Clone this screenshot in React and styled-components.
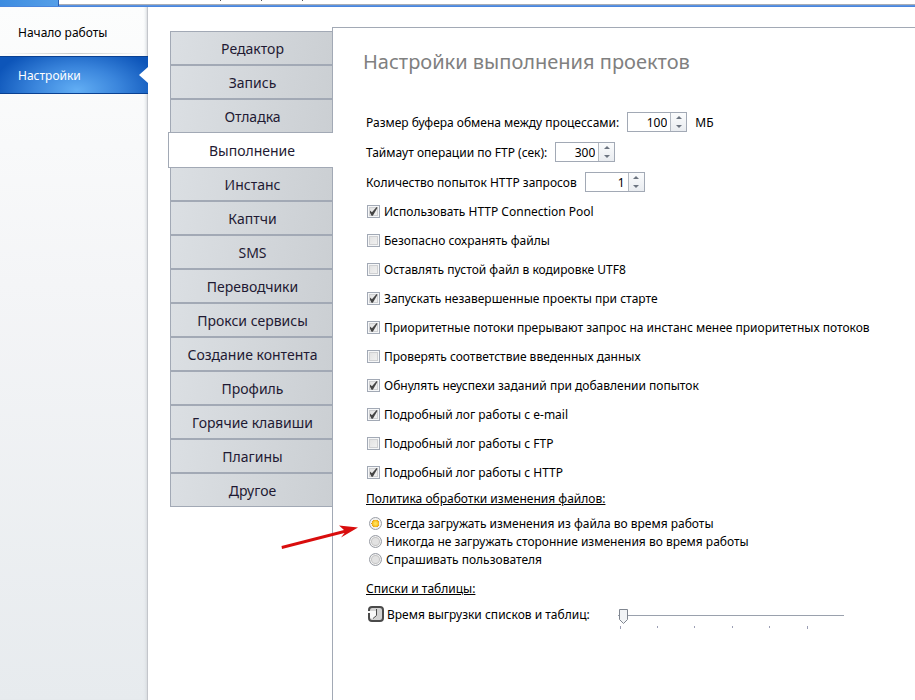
import React from 'react';
import styled, { createGlobalStyle } from 'styled-components';

const tabs = [
    'Редактор',
    'Запись',
    'Отладка',
    'Выполнение',
    'Инстанс',
    'Каптчи',
    'SMS',
    'Переводчики',
    'Прокси сервисы',
    'Создание контента',
    'Профиль',
    'Горячие клавиши',
    'Плагины',
    'Другое',
];

const numbers = [
    { id: 'buffer', label: 'Размер буфера обмена между процессами:', value: 100, unit: 'МБ' },
    { id: 'ftp', label: 'Таймаут операции по FTP (сек):', value: 300 },
    { id: 'tries', label: 'Количество попыток HTTP запросов', value: 1 },
];

const checks = [
    { label: 'Использовать HTTP Connection Pool', on: true },
    { label: 'Безопасно сохранять файлы', on: false },
    { label: 'Оставлять пустой файл в кодировке UTF8', on: false },
    { label: 'Запускать незавершенные проекты при старте', on: true },
    { label: 'Приоритетные потоки прерывают запрос на инстанс менее приоритетных потоков', on: true },
    { label: 'Проверять соответствие введенных данных', on: false },
    { label: 'Обнулять неуспехи заданий при добавлении попыток', on: true },
    { label: 'Подробный лог работы с e-mail', on: true },
    { label: 'Подробный лог работы с FTP', on: false },
    { label: 'Подробный лог работы с HTTP', on: true },
];

const policies = [
    'Всегда загружать изменения из файла во время работы',
    'Никогда не загружать сторонние изменения во время работы',
    'Спрашивать пользователя',
];

function NumberField({ id, label, value, unit }){
    return(
        <FieldRow>
            <label htmlFor={id}>{label}</label>
            <Spin>
                <input id={id} type="number" defaultValue={value} />
                <SpinButtons>
                    <SpinButton type="button" aria-label="Больше" $up />
                    <SpinButton type="button" aria-label="Меньше" />
                </SpinButtons>
            </Spin>
            {unit && <span>{unit}</span>}
        </FieldRow>
    );
}

function ClockIcon(){
    return(
        <svg width="16" height="16" viewBox="0 0 16 16" aria-hidden="true">
            <rect x="1" y="1" width="14" height="14" rx="3" fill="#d2d2d2" />
            <path d="M0 5h8.500v4.500L6 12.500H2.500z" fill="#f8f8f8" />
            <path d="M1 5V4a3 3 0 0 1 3-3h8a3 3 0 0 1 3 3v8a3 3 0 0 1-3 3H4a3 3 0 0 1-3-3V7" fill="none" stroke="#4a4a4a" strokeWidth="2" />
            <path d="M8.500 3v6.500L5 12.500" fill="none" stroke="#4a4a4a" strokeWidth="1" />
        </svg>
    );
}

function App(){
    return(
        <>
            <GlobalStyle />
            <Window>
                <TopBar>
                    <FileTab />
                    <Ribbon>
                        <i /><i /><i />
                    </Ribbon>
                </TopBar>

                <Body>
                    <Sidebar>
                        <SideLink href="#start">Начало работы</SideLink>
                        <SideLink href="#settings" $active>Настройки</SideLink>
                    </Sidebar>

                    <Main>
                        <Tabs>
                            {tabs.map((name) => (
                                <Tab key={name} type="button" $active={name === 'Выполнение'}>{name}</Tab>
                            ))}
                        </Tabs>

                        <Panel>
                            <h1>Настройки выполнения проектов</h1>
                            <Form>
                                {numbers.map((n) => <NumberField key={n.id} {...n} />)}

                                {checks.map((c) => (
                                    <CheckRow key={c.label}>
                                        <Check type="checkbox" defaultChecked={c.on} />
                                        {c.label}
                                    </CheckRow>
                                ))}

                                <SubTitle>Политика обработки изменения файлов:</SubTitle>
                                <RadioList>
                                    {policies.map((p, i) => (
                                        <RadioRow key={p}>
                                            <Radio type="radio" name="policy" defaultChecked={i === 0} />
                                            {p}
                                        </RadioRow>
                                    ))}
                                    <Arrow width="78" height="30" viewBox="0 0 78 30" aria-hidden="true">
                                        <path d="M0.500 24 1 27 63.500 11 60 15.500 77 5.500 58 3.500 63 8z" fill="#d90d0d" />
                                    </Arrow>
                                </RadioList>

                                <SubTitle $spaced>Списки и таблицы:</SubTitle>
                                <SliderRow>
                                    <SliderLabel htmlFor="unload">
                                        <ClockIcon />
                                        Время выгрузки списков и таблиц:
                                    </SliderLabel>
                                    <Slider>
                                        <input id="unload" type="range" min="0" max="60" defaultValue="0" />
                                        <Ticks>
                                            <i /><i /><i /><i /><i /><i />
                                        </Ticks>
                                    </Slider>
                                </SliderRow>
                            </Form>
                        </Panel>
                    </Main>
                </Body>
            </Window>
        </>
    );
}

export default App;

const GlobalStyle = createGlobalStyle`
* {
    box-sizing: border-box;
}

body {
    margin: 0;
    background: #fff;
    color: #000;
    font-family: "Noto Sans", "Open Sans", sans-serif;
    font-size: 12px;
}

button, input {
    margin: 0;
    font: inherit;
    color: inherit;
}
`;

const Window = styled.div`
display: flex;
flex-direction: column;
min-height: 100vh;
`;

const TopBar = styled.header`
display: flex;
height: 7px;
border-bottom: 1px solid #4a85dc;
`;

const FileTab = styled.div`
width: 59px;
background: linear-gradient(90deg, #3d8ce0, #559fe8);
border-right: 1px solid #2a5fb4;
`;

const Ribbon = styled.div`
flex: 1;
display: flex;
gap: 40px;
padding-left: 161px;
background: linear-gradient(#fff 4px, #a9adb5 4px, #a9adb5 5px, #5b93e0 5px);

i {
    width: 1px;
    height: 1px;
    background: #555;
}
`;

const Body = styled.div`
flex: 1;
display: flex;
`;

const Sidebar = styled.nav`
width: 148px;
flex-shrink: 0;
padding-top: 4px;
background: linear-gradient(#fcfdfd, #f4f5f7 40%, #e7ebee);
border-right: 1px solid #c3c6cb;
box-shadow: inset -3px 0 3px -2px #d5d9dd;
`;

const SideLink = styled.a`
position: relative;
display: flex;
align-items: center;
height: ${(p) => (p.$active ? '38px' : '43px')};
margin-right: ${(p) => (p.$active ? '-1px' : '0')};
margin-top: ${(p) => (p.$active ? '2px' : '0')};
padding-left: 18px;
color: ${(p) => (p.$active ? '#fff' : '#000')};
text-decoration: none;
border: solid #0a4192;
border-width: ${(p) => (p.$active ? '1px 0' : '0')};
background: ${(p) => (p.$active
    ? 'radial-gradient(ellipse 85px 46px at 52% 92%, #62aef4, #3a85dc 50%, #0d55b9)'
    : 'linear-gradient(90deg, transparent, #c9cccb 50%, transparent) bottom / 100% 1px no-repeat')};

&::after {
    content: "";
    display: ${(p) => (p.$active ? 'block' : 'none')};
    position: absolute;
    right: 0;
    top: 10px;
    border: solid transparent;
    border-width: 8px 9px 8px 0;
    border-right-color: #fff;
}
`;

const Main = styled.main`
flex: 1;
display: flex;
align-items: stretch;
padding: 20px 0 0 22px;
`;

const Tabs = styled.div`
width: 162px;
flex-shrink: 0;
display: flex;
flex-direction: column;
padding-top: 4px;
`;

const Tab = styled.button`
height: ${(p) => (p.$active ? '36px' : '34px')};
margin: ${(p) => (p.$active ? '-1px -1px -1px -2px' : '0')};
padding: 0 0 0 2px;
position: relative;
z-index: ${(p) => (p.$active ? 1 : 0)};
font-size: 14px;
color: #1f1a33;
border: 1px solid #a2a9b5;
border-right: 0;
background: ${(p) => (p.$active ? '#fff' : 'linear-gradient(100deg, #dbdfe3, #cbcfd3)')};
`;

const Panel = styled.section`
flex: 1;
min-width: 0;
padding: 19px 20px 20px 30px;
border: solid #a2a9b5;
border-width: 1px 0 0 1px;

h1 {
    margin: 0 0 30px;
    font-size: 20px;
    line-height: 30px;
    font-weight: 400;
    color: #808080;
}
`;

const Form = styled.form`
padding-left: 3px;
`;

const FieldRow = styled.div`
display: flex;
align-items: center;
gap: 8px;
height: 30px;
`;

const Spin = styled.div`
display: flex;
width: 60px;
height: 20px;
border: 1px solid #a2a9b5;

input {
    flex: 1;
    min-width: 0;
    padding: 0 3px 0 0;
    border: 0;
    outline: 0;
    background: #fff;
    text-align: right;
    appearance: textfield;
}

input::-webkit-inner-spin-button {
    appearance: none;
    margin: 0;
}
`;

const SpinButtons = styled.div`
display: flex;
flex-direction: column;
width: 16px;
border-left: 1px solid #b4bac3;
background: linear-gradient(#fbfcfd, #e9ecf0);
`;

const SpinButton = styled.button`
flex: 1;
display: flex;
align-items: center;
justify-content: center;
padding: 0;
border: 0;
background: none;

&::before {
    content: "";
    border: solid transparent;
    border-width: ${(p) => (p.$up ? '0 3px 3px' : '3px 3px 0')};
    border-bottom-color: ${(p) => (p.$up ? '#6c7480' : 'transparent')};
    border-top-color: ${(p) => (p.$up ? 'transparent' : '#6c7480')};
}
`;

const CheckRow = styled.label`
display: flex;
align-items: center;
gap: 4px;
height: 29px;
padding-left: 1px;
`;

const Check = styled.input`
appearance: none;
flex-shrink: 0;
width: 13px;
height: 13px;
border: 1px solid #a2a9b5;
background: linear-gradient(135deg, #dfdfdf, #f4f4f4);
box-shadow: inset 0 0 0 1px #f6f7f8, inset 0 0 0 2px #cfd0d2;

&:checked::before {
    content: "";
    display: block;
    width: 11px;
    height: 11px;
    background: #454545;
    clip-path: polygon(18% 42%, 36% 56%, 78% 8%, 86% 16%, 44% 88%, 32% 88%, 18% 62%);
}
`;

const SubTitle = styled.h2`
margin: ${(p) => (p.$spaced ? '11px 0 5px' : '2px 0 5px')};
font-size: 12px;
line-height: 20px;
font-weight: 400;
text-decoration: underline;
`;

const RadioList = styled.div`
position: relative;
`;

const RadioRow = styled.label`
display: flex;
align-items: center;
gap: 4px;
height: 18px;
padding-left: 3px;
`;

const Radio = styled.input`
appearance: none;
flex-shrink: 0;
width: 13px;
height: 13px;
border: 1px solid #9a9ea6;
border-radius: 50%;
background: #e2e2e2;
box-shadow: inset 0 0 0 1px #f4f4f4, inset 0 0 0 2px #c4c4c4;

&:checked {
    background: radial-gradient(circle, #ffdf55 1px, #f7bd20 3px, #d9921a 4px, #f1f1f1 4px);
    box-shadow: none;
}
`;

const Arrow = styled.svg`
position: absolute;
left: -85px;
top: 8px;
pointer-events: none;
`;

const SliderRow = styled.div`
display: flex;
align-items: flex-start;
gap: 28px;
`;

const SliderLabel = styled.label`
display: flex;
align-items: center;
gap: 3px;
height: 20px;
padding-left: 2px;
`;

const Slider = styled.div`
flex: 1;
max-width: 226px;
padding-top: 4px;

input {
    appearance: none;
    display: block;
    width: 100%;
    height: 16px;
    background: linear-gradient(#9aa1ad, #9aa1ad) 0 7px / 100% 1px no-repeat;
}

input::-webkit-slider-thumb {
    appearance: none;
    width: 11px;
    height: 16px;
    background: url("data:image/svg+xml,%3Csvg xmlns='http://www.w3.org/2000/svg' width='11' height='16'%3E%3Cpath d='M1.500 1.500h8v10l-4 4-4-4z' fill='%23f2f4f6' stroke='%23808690'/%3E%3C/svg%3E") no-repeat;
}
`;

const Ticks = styled.div`
display: flex;
justify-content: space-between;
width: 84%;
padding: 2px 0 0 2px;

i {
    width: 1px;
    height: 2px;
    background: #9c9fb5;
}

i:first-child, i:last-child {
    height: 3px;
}
`;
